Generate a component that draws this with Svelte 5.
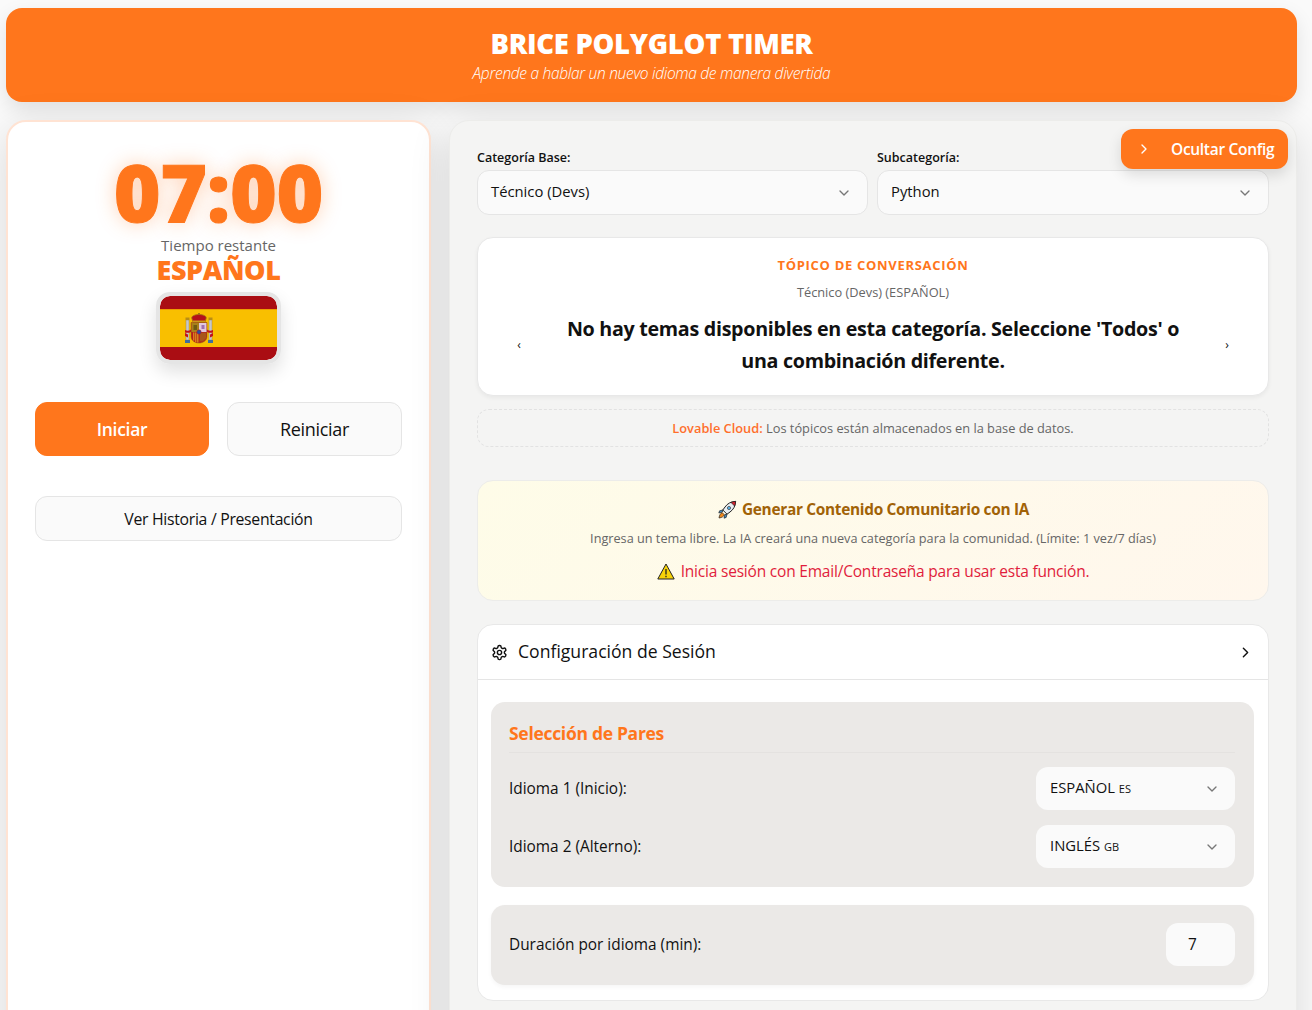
<script>
	const pairs = [
		{ label: 'Idioma 1 (Inicio):', name: 'ESPAÑOL', code: 'ES' },
		{ label: 'Idioma 2 (Alterno):', name: 'INGLÉS', code: 'GB' }
	];
</script>

{#snippet chevron(cls)}
	<svg class={cls} viewBox="0 0 24 24" fill="none" stroke="currentColor" stroke-width="2" stroke-linecap="round" stroke-linejoin="round"><path d="m6 9 6 6 6-6" /></svg>
{/snippet}

{#snippet chevronRight(cls)}
	<svg class={cls} viewBox="0 0 24 24" fill="none" stroke="currentColor" stroke-width="2" stroke-linecap="round" stroke-linejoin="round"><path d="m9 18 6-6-6-6" /></svg>
{/snippet}

<div class="page">
	<header class="hero">
		<h1>BRICE POLYGLOT TIMER</h1>
		<p>Aprende a hablar un nuevo idioma de manera divertida</p>
	</header>

	<div class="columns">
		<aside class="timer-card">
			<div class="time">07:00</div>
			<div class="remaining">Tiempo restante</div>
			<div class="lang">ESPAÑOL</div>
			<div class="flag">
				<svg viewBox="0 0 117 64" width="117" height="64">
					<rect width="117" height="64" fill="#aa0d13" />
					<rect y="13" width="117" height="38" fill="#f9bf00" />
					<rect y="13" width="117" height="1" fill="#ee9c00" />
					<!-- pillars -->
					<rect x="26" y="24" width="3" height="20" fill="#c8c8c8" stroke="#8a7a50" stroke-width=".4" />
					<rect x="49" y="24" width="3" height="20" fill="#c8c8c8" stroke="#8a7a50" stroke-width=".4" />
					<rect x="25.5" y="21.5" width="4" height="2.5" fill="#b98d14" />
					<rect x="48.5" y="21.5" width="4" height="2.5" fill="#b98d14" />
					<rect x="25" y="44" width="5" height="3" fill="#3f6f9f" />
					<rect x="48" y="44" width="5" height="3" fill="#3f6f9f" />
					<path d="M25 34c2 1 4 1 6-.5v2.5c-2 1-4 1-6 .5zM53 34c-2 1-4 1-6-.5v2.5c2 1 4 1 6 .5z" fill="#c2121c" />
					<path d="M25 37l3 1.500v3l-3-1.500zM53 37l-3 1.500v3l3-1.500z" fill="#c2121c" />
					<!-- crown -->
					<rect x="38" y="17" width="2" height="3" fill="#a37a10" />
					<path d="M32 23c-1.500-3 3-4.500 7-4.500s8.500 1.500 7 4.500l-1 3H33z" fill="#b5121b" stroke="#a37a10" stroke-width=".8" />
					<rect x="33" y="24.5" width="12" height="1.5" fill="#c99a1c" />
					<!-- shield -->
					<path d="M31 26.500h16v14c0 4-4 6.500-8 6.500s-8-2.500-8-6.500z" fill="#b5301b" stroke="#8a5a14" stroke-width=".5" />
					<rect x="31.5" y="27" width="7.5" height="9" fill="#a8801a" />
					<rect x="39" y="27" width="7.5" height="9" fill="#e2c8de" />
					<rect x="41.5" y="29" width="3" height="4" fill="#a070b0" />
					<rect x="33.5" y="29" width="3.5" height="5" fill="#6e5a12" />
					<path d="M32.800 36.500v7.500M34.800 36.500v9.500M36.800 36.500v10" stroke="#c2121c" stroke-width="1" />
					<path d="M33.800 36.500v8M35.800 36.500v9.500M37.800 36.500v10" stroke="#e0b020" stroke-width="1" />
					<path d="M40 37h6v5l-3 3-3 0z" fill="#a8561a" />
					<circle cx="39" cy="36" r="2.2" fill="#2a4f9f" stroke="#c2121c" stroke-width=".5" />
				</svg>
			</div>
			<div class="actions">
				<button class="btn primary">Iniciar</button>
				<button class="btn ghost">Reiniciar</button>
			</div>
			<button class="btn story">Ver Historia / Presentación</button>
		</aside>

		<main class="panel">
			<button class="toggle">
				{@render chevronRight('toggle-icon')}
				<span>Ocultar Config</span>
			</button>

			<div class="filters">
				<div class="field">
					<span class="field-label">Categoría Base:</span>
					<div class="select"><span class="value">Técnico (Devs)</span>{@render chevron('caret')}</div>
				</div>
				<div class="field">
					<span class="field-label">Subcategoría:</span>
					<div class="select"><span class="value">Python</span>{@render chevron('caret')}</div>
				</div>
			</div>

			<section class="topic">
				<div class="topic-title">TÓPICO DE CONVERSACIÓN</div>
				<div class="topic-sub">Técnico (Devs) (ESPAÑOL)</div>
				<div class="topic-body">
					<span class="nav">‹</span>
					<p>No hay temas disponibles en esta categoría. Seleccione 'Todos' o una combinación diferente.</p>
					<span class="nav">›</span>
				</div>
			</section>

			<div class="cloud"><b>Lovable Cloud:</b> Los tópicos están almacenados en la base de datos.</div>

			<section class="community">
				<h3>
					<svg class="rocket" viewBox="0 0 20 20" width="20" height="20">
						<path d="M18.600 1.400c-4.600.2-8 2-10.600 5.600L5.800 10l4.200 4.200 3-2.200c3.600-2.600 5.400-6 5.600-10.600z" fill="#e8eef2" stroke="#222" stroke-width="1" />
						<path d="M18.600 1.400c-1.700.1-3.200.4-4.600 1l3.600 3.600c.6-1.400.9-2.900 1-4.600z" fill="#d8232f" stroke="#222" stroke-width=".7" />
						<circle cx="12" cy="8" r="1.600" fill="#5bb4e8" stroke="#222" stroke-width=".6" />
						<path d="M6 10 2.600 10.800 1.800 13l3.500-.9zM10 14l-.8 3.400-2.200.8.900-3.500z" fill="#3d8fd0" stroke="#222" stroke-width=".7" />
						<path d="M5.200 12.600c-1.600.6-2.800 2.400-3.200 5.400 3-.4 4.800-1.600 5.400-3.200z" fill="#f28a1c" stroke="#222" stroke-width=".7" />
					</svg>
					Generar Contenido Comunitario con IA
				</h3>
				<p class="community-sub">Ingresa un tema libre. La IA creará una nueva categoría para la comunidad. (Límite: 1 vez/7 días)</p>
				<p class="community-warn">
					<svg viewBox="0 0 18 17" width="18" height="17">
						<path d="M9 1 17.200 16H.8z" fill="#f7d308" stroke="#222" stroke-width="1" stroke-linejoin="round" />
						<path d="M9 6v5.500M9 12.800v1.400" stroke="#222" stroke-width="1.300" />
					</svg>
					Inicia sesión con Email/Contraseña para usar esta función.
				</p>
			</section>

			<section class="config">
				<div class="config-head">
					<svg class="gear" viewBox="0 0 24 24" fill="none" stroke="currentColor" stroke-width="2" stroke-linecap="round" stroke-linejoin="round">
						<path d="M12.220 2h-.44a2 2 0 0 0-2 2v.18a2 2 0 0 1-1 1.730l-.43.250a2 2 0 0 1-2 0l-.15-.080a2 2 0 0 0-2.730.730l-.22.380a2 2 0 0 0 .730 2.730l.15.100a2 2 0 0 1 1 1.720v.510a2 2 0 0 1-1 1.740l-.15.090a2 2 0 0 0-.730 2.730l.22.380a2 2 0 0 0 2.730.730l.15-.080a2 2 0 0 1 2 0l.43.250a2 2 0 0 1 1 1.730V20a2 2 0 0 0 2 2h.44a2 2 0 0 0 2-2v-.18a2 2 0 0 1 1-1.730l.43-.250a2 2 0 0 1 2 0l.15.080a2 2 0 0 0 2.730-.730l.22-.390a2 2 0 0 0-.730-2.730l-.15-.080a2 2 0 0 1-1-1.740v-.500a2 2 0 0 1 1-1.740l.15-.090a2 2 0 0 0 .730-2.730l-.22-.380a2 2 0 0 0-2.730-.730l-.15.080a2 2 0 0 1-2 0l-.43-.250a2 2 0 0 1-1-1.730V4a2 2 0 0 0-2-2z" />
						<circle cx="12" cy="12" r="3" />
					</svg>
					<span class="head-title">Configuración de Sesión</span>
					{@render chevronRight('head-caret')}
				</div>
				<div class="config-body">
					<div class="group">
						<h4>Selección de Pares</h4>
						{#each pairs as pair}
							<div class="row">
								<span>{pair.label}</span>
								<div class="select small">
									<span class="value">{pair.name} <small>{pair.code}</small></span>
									{@render chevron('caret')}
								</div>
							</div>
						{/each}
					</div>
					<div class="group single">
						<div class="row">
							<span>Duración por idioma (min):</span>
							<div class="number">7</div>
						</div>
					</div>
				</div>
			</section>
		</main>
	</div>
</div>

<style>
	:global(body) {
		background: #fafafa;
		font-family: 'Open Sans', 'Noto Sans', sans-serif;
		color: #111;
	}

	.page {
		height: 1010px;
		overflow: hidden;
		box-sizing: border-box;
		padding: 8px 15px 0 6px;
	}

	.hero {
		height: 94px;
		box-sizing: border-box;
		padding-top: 20px;
		background: #ff761c;
		border-radius: 16px;
		color: #fff;
		text-align: center;
		box-shadow: 0 8px 20px rgba(0, 0, 0, 0.1);
	}

	.hero h1 {
		margin: 0;
		font-size: 27.5px;
		line-height: 32px;
		font-weight: 800;
		letter-spacing: -0.3px;
	}

	.hero p {
		margin: 3px 0 0;
		font-size: 15.5px;
		line-height: 20px;
		font-style: italic;
		font-weight: 300;
		letter-spacing: -0.3px;
	}

	.columns {
		display: grid;
		grid-template-columns: 425px 848px;
		gap: 18px;
		margin-top: 18px;
		align-items: start;
	}

	.timer-card {
		height: 1100px;
		box-sizing: border-box;
		background: #fff;
		border: 2px solid #ffe3d3;
		border-radius: 20px;
		padding: 24px 27px;
		display: flex;
		flex-direction: column;
		align-items: center;
		box-shadow: 0 10px 40px rgba(0, 0, 0, 0.13);
	}

	.time {
		font-size: 80px;
		line-height: 89px;
		font-weight: 800;
		color: #ff761c;
		letter-spacing: -0.2px;
		-webkit-text-stroke: 1px #ff761c;
		text-shadow: 0 0 20px rgba(255, 118, 28, 0.35);
	}

	.remaining {
		font-size: 15px;
		line-height: 20px;
		font-weight: 500;
		color: #666;
	}

	.lang {
		font-size: 27px;
		line-height: 30px;
		font-weight: 800;
		color: #ff761c;
		letter-spacing: -0.4px;
	}

	.flag {
		margin-top: 7px;
		border: 4px solid #e5e5e5;
		border-radius: 14px;
		overflow: hidden;
		display: flex;
		box-shadow: 0 8px 18px rgba(0, 0, 0, 0.12);
	}

	.flag svg {
		border-radius: 10px;
	}

	.actions {
		display: grid;
		grid-template-columns: 174px 175px;
		gap: 18px;
		width: 100%;
		margin-top: 38px;
	}

	.btn {
		font: inherit;
		font-size: 18px;
		height: 54px;
		border-radius: 12px;
		color: #111;
		border: 1px solid #e5e5e5;
		background: #fafafa;
		letter-spacing: -0.3px;
	}

	.primary {
		background: #ff761c;
		border-color: #ff761c;
		color: #fff;
		font-size: 17.5px;
		font-weight: 600;
	}

	.story {
		width: 100%;
		height: 45px;
		margin-top: 40px;
		font-size: 15.8px;
		font-weight: 500;
	}

	.panel {
		position: relative;
		height: 1100px;
		box-sizing: border-box;
		background: #f4f4f3;
		border: 1px solid #ececea;
		border-radius: 20px;
		padding: 28px 27px;
		box-shadow: 0 10px 40px rgba(0, 0, 0, 0.13);
	}

	.toggle {
		position: absolute;
		top: 8px;
		right: 8px;
		width: 167px;
		height: 40px;
		display: flex;
		align-items: center;
		padding: 0 12px 0 15px;
		font: inherit;
		font-size: 15.5px;
		font-weight: 600;
		letter-spacing: -0.3px;
		white-space: nowrap;
		color: #fff;
		background: #ff761c;
		border: 0;
		border-radius: 12px;
		box-shadow: 0 6px 14px rgba(0, 0, 0, 0.12);
		z-index: 2;
	}

	.toggle-icon {
		flex: none;
		width: 16px;
		height: 16px;
		margin-right: 19px;
	}

	.filters {
		display: grid;
		grid-template-columns: 391px 392px;
		gap: 9px;
	}

	.field-label {
		display: block;
		font-size: 12.5px;
		line-height: 17px;
		font-weight: 600;
		margin-bottom: 4px;
	}

	.select {
		display: flex;
		justify-content: space-between;
		align-items: center;
		height: 45px;
		box-sizing: border-box;
		padding: 0 15px 0 13px;
		background: #fafafa;
		border: 1px solid #e5e5e5;
		border-radius: 12px;
		font-size: 14.8px;
	}

	.value {
		margin-top: -3px;
	}

	.caret {
		width: 16px;
		height: 16px;
		color: #777;
	}

	.topic {
		margin-top: 22px;
		height: 159px;
		box-sizing: border-box;
		padding-top: 18px;
		background: #fff;
		border: 1px solid #e8e8e8;
		border-radius: 16px;
		text-align: center;
		box-shadow: 0 2px 4px rgba(0, 0, 0, 0.05);
	}

	.topic-title {
		font-size: 13px;
		line-height: 18px;
		font-weight: 700;
		letter-spacing: 0.7px;
		color: #ff761c;
	}

	.topic-sub {
		margin-top: 9px;
		font-size: 12.8px;
		line-height: 18px;
		color: #666;
	}

	.topic-body {
		display: flex;
		align-items: center;
		margin-top: 12px;
		padding: 0 36px;
	}

	.topic-body p {
		flex: 1;
		margin: 0 32px;
		font-size: 19.7px;
		line-height: 32px;
		font-weight: 700;
		letter-spacing: -0.3px;
	}

	.nav {
		font-size: 12px;
		width: 10px;
		line-height: 18px;
	}

	.cloud {
		margin-top: 13px;
		height: 38px;
		box-sizing: border-box;
		border: 1px dashed #e2e2e2;
		border-radius: 12px;
		font-size: 12.8px;
		line-height: 36px;
		text-align: center;
		color: #666;
	}

	.cloud b {
		font-weight: 600;
		color: #ff6f2c;
	}

	.community {
		margin-top: 33px;
		height: 121px;
		box-sizing: border-box;
		padding-top: 19px;
		border: 1px solid #ececea;
		border-radius: 16px;
		background: linear-gradient(135deg, #fefce8, #fff7ed);
		text-align: center;
	}

	.community h3 {
		margin: 0;
		display: flex;
		justify-content: center;
		align-items: center;
		gap: 5px;
		font-size: 15.4px;
		line-height: 20px;
		font-weight: 700;
		color: #a16207;
		letter-spacing: -0.3px;
	}

	.community-sub {
		margin: 8px 0 0;
		font-size: 12.7px;
		line-height: 20px;
		color: #666;
	}

	.community-warn {
		margin: 13px 0 0;
		display: flex;
		justify-content: center;
		align-items: center;
		gap: 6px;
		font-size: 15.5px;
		line-height: 20px;
		color: #e11d3c;
		letter-spacing: -0.2px;
	}

	.config {
		margin-top: 23px;
		background: #fff;
		border: 1px solid #e8e8e8;
		border-radius: 16px;
	}

	.config-head {
		display: flex;
		align-items: center;
		height: 54px;
		padding: 0 14px;
		border-bottom: 1px solid #e5e5e5;
		font-size: 17.6px;
	}

	.head-title {
		flex: 1;
		margin-top: -2px;
	}

	.gear {
		width: 17px;
		height: 17px;
		margin-right: 10px;
		margin-left: -1px;
	}

	.head-caret {
		width: 17px;
		height: 17px;
		margin-right: 0;
	}

	.config-body {
		padding: 22px 14px 15px 13px;
	}

	.group {
		height: 185px;
		box-sizing: border-box;
		padding: 18px 19px 0 18px;
		background: #ebe9e7;
		border-radius: 14px;
	}

	.group h4 {
		margin: 0 0 14px;
		padding-bottom: 6px;
		font-size: 17.5px;
		line-height: 26px;
		font-weight: 700;
		color: #ff761c;
		border-bottom: 1px solid #e4e2e0;
		letter-spacing: -0.3px;
	}

	.row {
		display: flex;
		justify-content: space-between;
		align-items: center;
		margin-bottom: 15px;
		font-size: 15.4px;
		font-weight: 500;
	}

	.single {
		height: 80px;
		margin-top: 18px;
		padding-top: 18px;
		box-shadow: 0 2px 4px rgba(0, 0, 0, 0.04);
	}

	.select.small {
		width: 199px;
		height: 43px;
		padding-left: 14px;
		border: 0;
		font-weight: 400;
	}

	.select small {
		font-size: 11px;
	}

	.number {
		width: 69px;
		height: 43px;
		box-sizing: border-box;
		padding-left: 22px;
		line-height: 44px;
		font-weight: 400;
		background: #fafafa;
		border-radius: 12px;
	}
</style>
